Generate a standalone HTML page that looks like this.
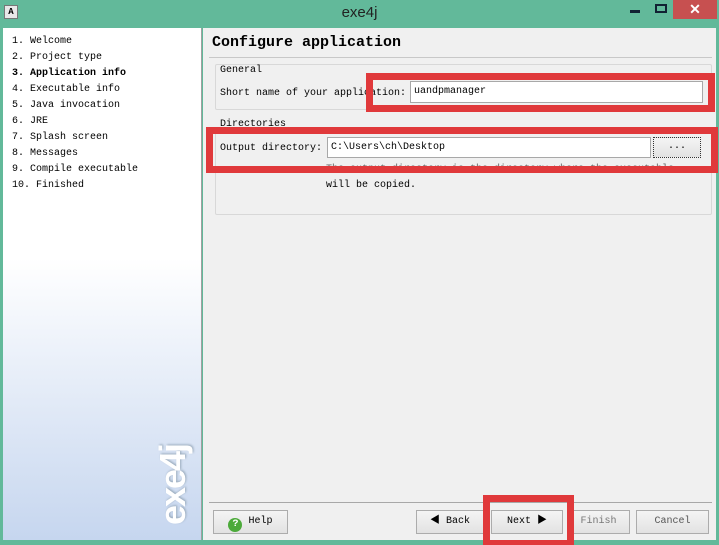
<!DOCTYPE html>
<html><head><style>
*{margin:0;padding:0;box-sizing:border-box}
html,body{width:719px;height:545px;overflow:hidden}
body{background:#62b99a;position:relative;font-family:"Liberation Mono","Noto Sans CJK SC",monospace;font-size:10px;color:#000}
.a{position:absolute}
.left{left:3px;top:28px;width:199px;height:512px;background:linear-gradient(#fff 0%,#fff 45%,#c6d6ef 100%);border-right:1px solid #a0a0a0;overflow:hidden}
.right{left:203px;top:28px;width:513px;height:512px;background:#f0f0f0}
.steps div{height:16px;line-height:16px}
.grp{border:1px solid #d8d8d8;border-radius:2px}
.inp{background:#fff;border:1px solid #a8a8a8;padding-left:3px;line-height:20px}
.btn{border:1px solid #acacac;background:linear-gradient(#f4f4f4,#e2e2e2);text-align:center;line-height:22px;height:24px}
.red{border:7px solid #e0393b}
</style></head><body>
<div class="a" style="left:4px;top:5px;width:14px;height:14px;background:#e8e8e8;border:1px solid #777;font-size:9px;line-height:12px;text-align:center;font-weight:bold">A</div>
<div class="a" style="left:0;width:719px;top:4px;text-align:center;font-family:'Liberation Sans',sans-serif;font-size:15px;color:#222">exe4j</div>
<div class="a" style="left:630px;top:10px;width:10px;height:3px;background:#123"></div>
<div class="a" style="left:655px;top:4px;width:12px;height:9px;border:2px solid #123"></div>
<div class="a" style="left:673px;top:0;width:44px;height:19px;background:#c75050;color:#fff;text-align:center;font-family:'Liberation Sans',sans-serif;font-size:14px;font-weight:bold;line-height:18px">✕</div>
<div class="a left">
 <div class="steps a" style="left:9px;top:6px">
  <div>1. Welcome</div><div>2. Project type</div><div style="font-weight:bold">3. Application info</div><div>4. Executable info</div><div>5. Java invocation</div><div>6. JRE</div><div>7. Splash screen</div><div>8. Messages</div><div>9. Compile executable</div><div>10. Finished</div>
 </div>
 <div class="a" style="left:122px;top:438px;width:96px;height:38px;transform:rotate(-90deg);transform-origin:center;font-family:'Liberation Sans',sans-serif;font-weight:bold;font-size:36px;letter-spacing:-2px;color:#fff;text-shadow:1px 1px 2px #9ab;line-height:38px;text-align:center">exe4j</div>
</div>
<div class="a right">
 <div class="a" style="left:9px;top:6px;font-size:15px;font-weight:bold">Configure application</div>
 <div class="a" style="left:6px;top:29px;width:503px;border-top:1px solid #c8c8c8"></div>
 <div class="a grp" style="left:12px;top:36px;width:497px;height:46px"></div>
 <div class="a" style="left:17px;top:37px">General</div>
 <div class="a" style="left:17px;top:60px">Short name of your application:</div>
 <div class="a inp" style="left:207px;top:53px;width:293px;height:22px">uandpmanager</div>
 <div class="a grp" style="left:12px;top:101px;width:497px;height:86px"></div>
 <div class="a" style="left:17px;top:91px">Directories</div>
 <div class="a" style="left:17px;top:115px">Output directory:</div>
 <div class="a inp" style="left:124px;top:109px;width:324px;height:21px;line-height:19px">C:\Users\ch\Desktop</div>
 <div class="a btn" style="left:450px;top:109px;width:48px;height:21px;line-height:18px;border:1px dotted #333">...</div>
 <div class="a" style="left:123px;top:136px;color:#666">The output directory is the directory where the executable</div>
 <div class="a" style="left:123px;top:152px">will be copied.</div>
 <div class="a" style="left:6px;top:474px;width:503px;border-top:1px solid #a8a8a8"></div>
 <div class="a btn" style="left:10px;top:482px;width:75px"><span style="display:inline-block;width:14px;height:14px;border-radius:7px;background:#4caa3a;color:#fff;font-size:10px;line-height:14px;vertical-align:-3px;font-weight:bold">?</span> Help</div>
 <div class="a btn" style="left:213px;top:482px;width:68px">◀ Back</div>
 <div class="a btn" style="left:288px;top:482px;width:72px">Next ▶</div>
 <div class="a btn" style="left:364px;top:482px;width:63px;color:#777">Finish</div>
 <div class="a btn" style="left:433px;top:482px;width:73px;color:#555">Cancel</div>
</div>
<div class="a red" style="left:366px;top:73px;width:349px;height:39px"></div>
<div class="a red" style="left:206px;top:127px;width:512px;height:46px"></div>
<div class="a red" style="left:483px;top:495px;width:91px;height:52px"></div>
</body></html>
